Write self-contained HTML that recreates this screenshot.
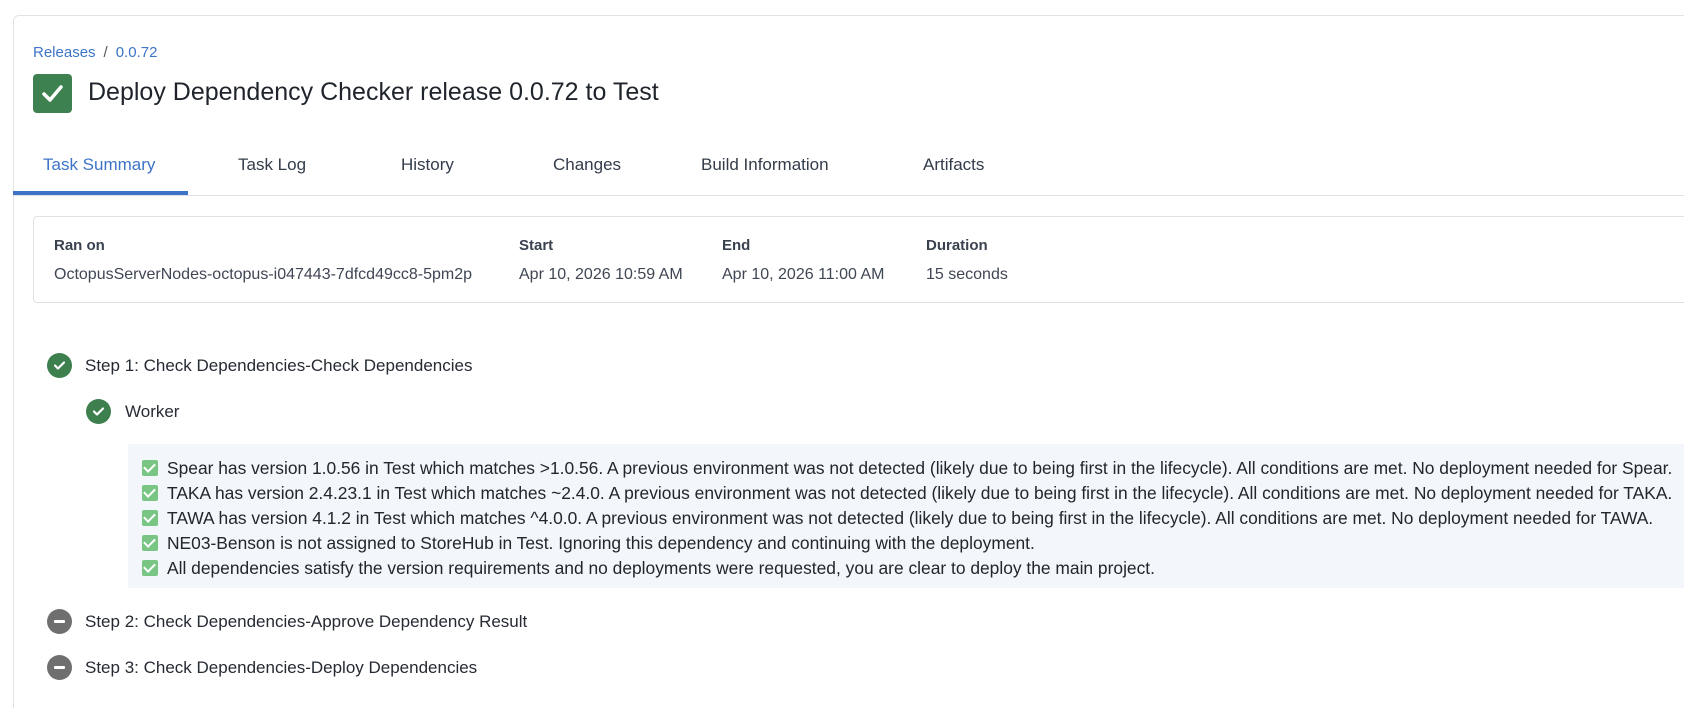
<!DOCTYPE html>
<html style="height:708px;overflow:hidden"><head><meta charset="utf-8"><style>
*{box-sizing:border-box;margin:0;padding:0}
body{width:1684px;height:708px;overflow:hidden;background:#fff;font-family:"Liberation Sans",sans-serif;color:#252a33;position:relative}
.card{position:absolute;left:13px;top:15px;width:1671px;height:693px;border:1px solid #e1e3e6;border-right:none;border-bottom:none;border-radius:6px 0 0 0}
.abs{position:absolute;white-space:nowrap}
.bc{left:33px;top:44px;font-size:15px;color:#3d74c7}
.bc span{color:#555;margin:0 8px}
.ticon{left:33px;top:74px;width:39px;height:39px;background:#3e8150;border-radius:4px}
.title{left:88px;top:78px;font-size:25px;color:#1f242c}
.tab{top:155px;font-size:17px;color:#333c4a}
.tabline{left:13px;top:195px;width:1671px;height:1px;background:#dfe1e5}
.under{left:13px;top:191px;width:175px;height:4px;background:#3d74c7}
.info{left:33px;top:216px;width:1651px;height:87px;border:1px solid #dfe1e5;border-right:none;border-radius:4px 0 0 4px}
.lbl{top:237px;font-size:15px;font-weight:bold;color:#3a4250}
.val{top:266px;font-size:16px;color:#3f4654}
.circ{width:25px;height:25px;border-radius:50%}
.g{background:#3e7f4e}
.gr{background:#6f6f6f}
.step{font-size:17px;color:#252a33}
.log{left:128px;top:444px;width:1556px;height:144px;background:#f3f6fa}
.row{left:142px;font-size:17.4px;color:#22262d}
.cb{display:inline-block;width:16px;height:16px;background:#79c684;border-radius:2px;vertical-align:-2px;margin-right:9px;position:relative}
.cb::after{content:"";position:absolute;left:4px;top:1px;width:5px;height:9px;border:solid #fff;border-width:0 2px 2px 0;transform:rotate(45deg)}
</style></head><body>
<div class="card"></div>
<div class="abs bc">Releases<span>/</span>0.0.72</div>
<div class="abs ticon"><svg width="39" height="39" viewBox="0 0 39 39"><path d="M11 20 L17 26 L28 13" stroke="#fff" stroke-width="3.5" fill="none" stroke-linecap="round" stroke-linejoin="round"/></svg></div>
<div class="abs title">Deploy Dependency Checker release 0.0.72 to Test</div>
<div class="abs tab" style="left:43px;color:#3d74c7">Task Summary</div>
<div class="abs tab" style="left:238px">Task Log</div>
<div class="abs tab" style="left:401px">History</div>
<div class="abs tab" style="left:553px">Changes</div>
<div class="abs tab" style="left:701px">Build Information</div>
<div class="abs tab" style="left:923px">Artifacts</div>
<div class="abs tabline"></div>
<div class="abs under"></div>
<div class="abs info"></div>
<div class="abs lbl" style="left:54px">Ran on</div>
<div class="abs lbl" style="left:519px">Start</div>
<div class="abs lbl" style="left:722px">End</div>
<div class="abs lbl" style="left:926px">Duration</div>
<div class="abs val" style="left:54px">OctopusServerNodes-octopus-i047443-7dfcd49cc8-5pm2p</div>
<div class="abs val" style="left:519px">Apr 10, 2026 10:59 AM</div>
<div class="abs val" style="left:722px">Apr 10, 2026 11:00 AM</div>
<div class="abs val" style="left:926px">15 seconds</div>

<div class="abs circ g" style="left:47px;top:353px"><svg width="25" height="25"><path d="M8 12.5 L11 15.5 L17 9.5" stroke="#fff" stroke-width="2.2" fill="none" stroke-linecap="round" stroke-linejoin="round"/></svg></div>
<div class="abs step" style="left:85px;top:356px">Step 1: Check Dependencies-Check Dependencies</div>
<div class="abs circ g" style="left:86px;top:399px"><svg width="25" height="25"><path d="M8 12.5 L11 15.5 L17 9.5" stroke="#fff" stroke-width="2.2" fill="none" stroke-linecap="round" stroke-linejoin="round"/></svg></div>
<div class="abs step" style="left:125px;top:402px">Worker</div>

<div class="abs log"></div>
<div class="abs row" style="top:458px"><span class="cb"></span>Spear has version 1.0.56 in Test which matches &gt;1.0.56. A previous environment was not detected (likely due to being first in the lifecycle). All conditions are met. No deployment needed for Spear.</div>
<div class="abs row" style="top:483px"><span class="cb"></span>TAKA has version 2.4.23.1 in Test which matches ~2.4.0. A previous environment was not detected (likely due to being first in the lifecycle). All conditions are met. No deployment needed for TAKA.</div>
<div class="abs row" style="top:508px"><span class="cb"></span>TAWA has version 4.1.2 in Test which matches ^4.0.0. A previous environment was not detected (likely due to being first in the lifecycle). All conditions are met. No deployment needed for TAWA.</div>
<div class="abs row" style="top:533px"><span class="cb"></span>NE03-Benson is not assigned to StoreHub in Test. Ignoring this dependency and continuing with the deployment.</div>
<div class="abs row" style="top:558px"><span class="cb"></span>All dependencies satisfy the version requirements and no deployments were requested, you are clear to deploy the main project.</div>

<div class="abs circ gr" style="left:47px;top:609px"><div style="position:absolute;left:7px;top:11px;width:11px;height:3px;background:#fff;border-radius:1px"></div></div>
<div class="abs step" style="left:85px;top:612px">Step 2: Check Dependencies-Approve Dependency Result</div>
<div class="abs circ gr" style="left:47px;top:655px"><div style="position:absolute;left:7px;top:11px;width:11px;height:3px;background:#fff;border-radius:1px"></div></div>
<div class="abs step" style="left:85px;top:658px">Step 3: Check Dependencies-Deploy Dependencies</div>
</body></html>
